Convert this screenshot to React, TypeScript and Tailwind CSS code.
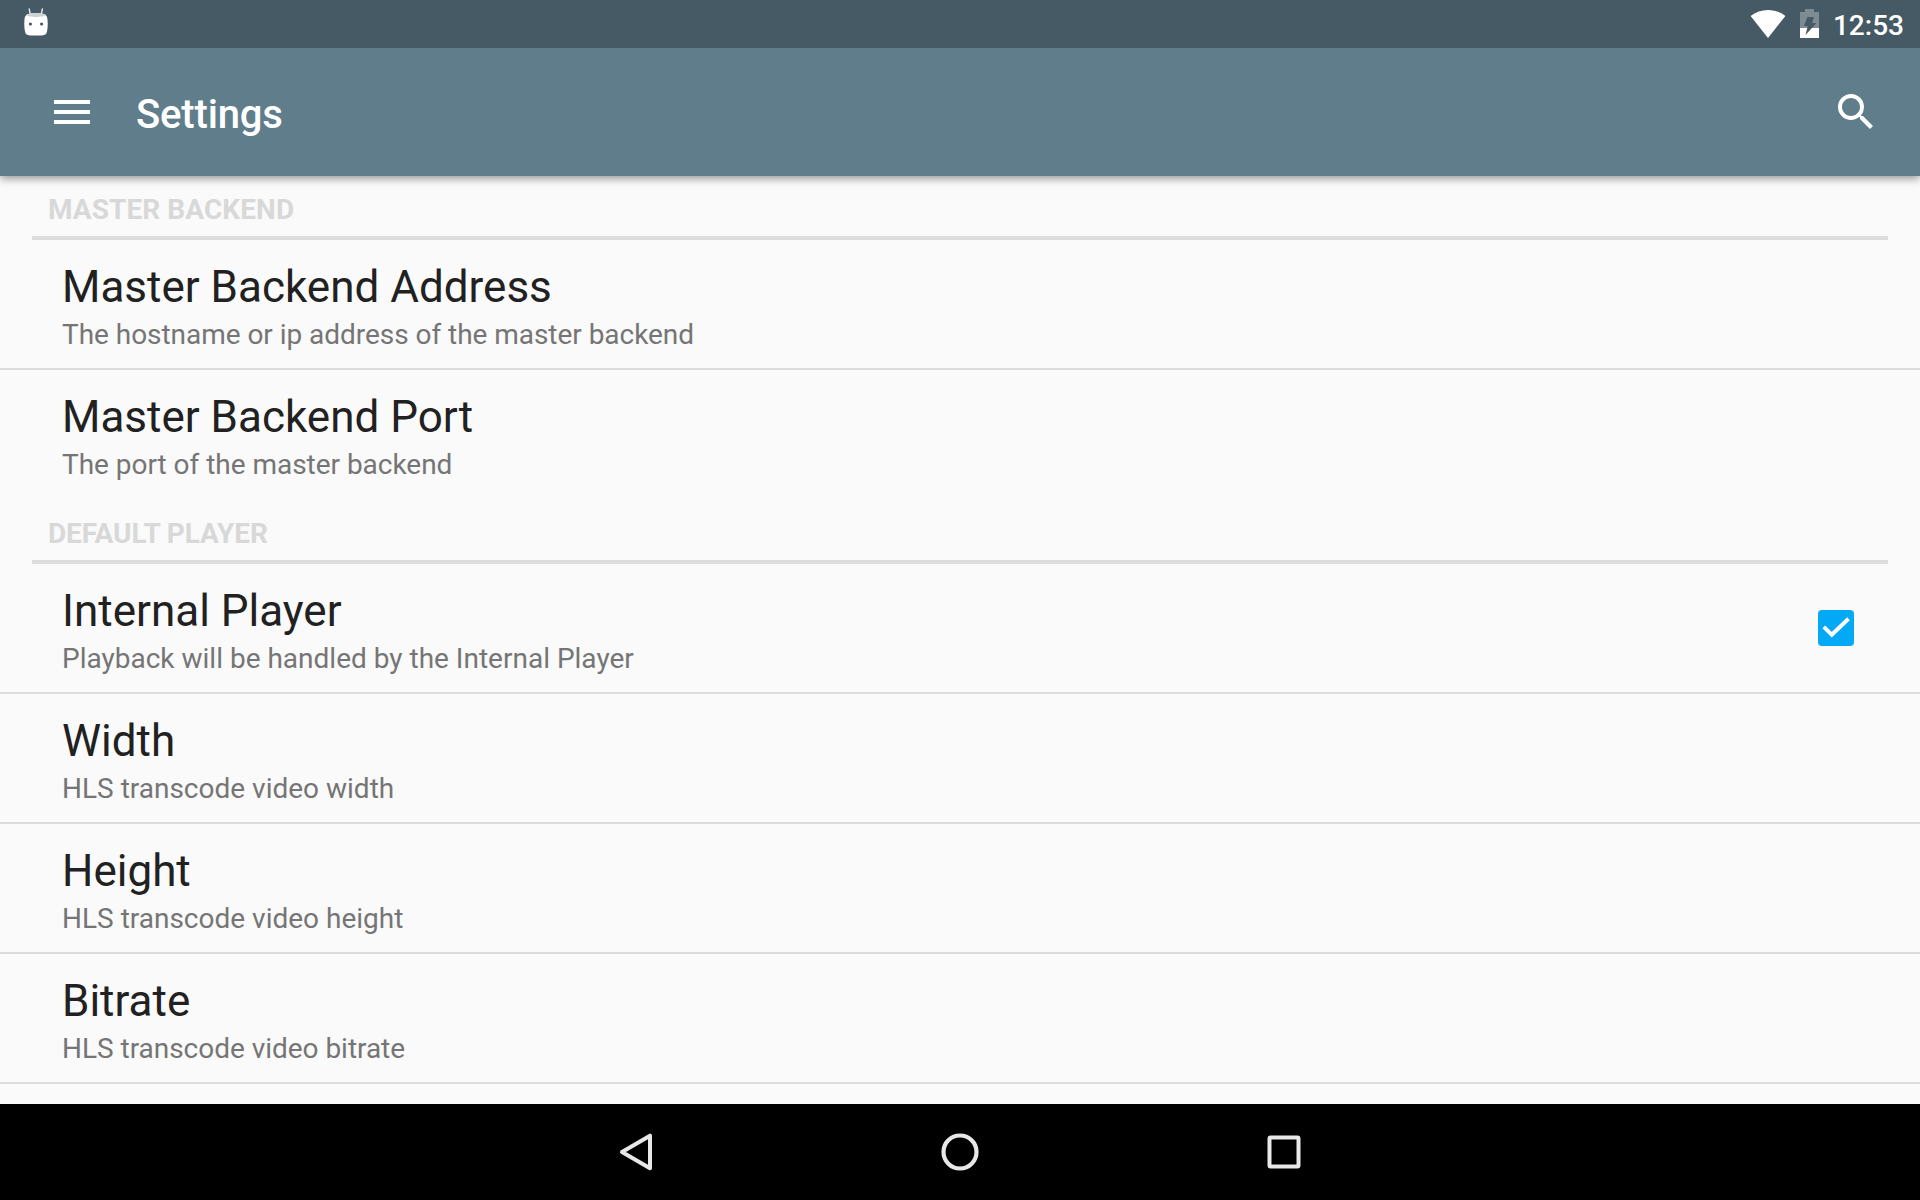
type Item = { title: string; summary: string; checked?: boolean; tracking?: string };
type Section = { name: string; tracking: string; items: Item[] };

const sections: Section[] = [
  {
    name: "MASTER BACKEND",
    tracking: "tracking-[0.08px]",
    items: [
      {
        title: "Master Backend Address",
        summary: "The hostname or ip address of the master backend",
        tracking: "tracking-[-0.04px]",
      },
      { title: "Master Backend Port", summary: "The port of the master backend", tracking: "tracking-[-0.03px]" },
    ],
  },
  {
    name: "DEFAULT PLAYER",
    tracking: "tracking-[-0.08px]",
    items: [
      { title: "Internal Player", summary: "Playback will be handled by the Internal Player", checked: true },
      { title: "Width", summary: "HLS transcode video width" },
      { title: "Height", summary: "HLS transcode video height" },
      { title: "Bitrate", summary: "HLS transcode video bitrate", tracking: "tracking-[-0.03px]" },
      { title: "", summary: "" },
    ],
  },
];

function StatusBar() {
  return (
    <div className="relative z-20 flex h-12 shrink-0 items-start justify-between bg-[#455a64] pr-4 pl-6 text-white">
      <svg className="h-12 w-6" viewBox="0 0 24 48" fill="none">
        <path d="M5.2 9l1.3 6M18.4 9l-1.3 6" stroke="#fff" strokeOpacity=".85" strokeWidth="1.4" strokeLinecap="round" />
        <path d="M3 14.5C6 12.4 18 12.4 21 14.5c2.2 2 2.2 2.4 2.6 6 .3 4 .1 8-.7 11.500-.7 2.300-1.700 3.200-5 3.400-4 .2-8 .2-11.800 0-3.300-.2-4.300-1.100-5-3.400-.8-3.500-1-7.500-.7-11.500.4-3.600.4-4 2.600-6z" fill="#fff" />
        <path d="M2.200 14.800C5 12.300 19 12.300 21.800 14.800 20 17.700 4 17.700 2.200 14.800z" fill="#ccd2d5" />
        <circle cx="6.400" cy="24" r="1.600" fill="#455a64" />
        <circle cx="17.600" cy="24" r="1.600" fill="#455a64" />
      </svg>
      <div className="flex items-start">
        <svg className="mr-[14px] h-12 w-9" viewBox="0 0 36 48">
          <path d="M18 38L.6 16C5.500 12 11.500 10 18 10s12.500 2 17.400 6z" fill="#fff" />
        </svg>
        <svg className="mr-[13px] h-12 w-5" viewBox="0 0 20 48">
          <path d="M5 9h9v3h5v16H0V12h5z" fill="#fff" fillOpacity=".3" />
          <path d="M0 28h19v10H0z" fill="#fff" />
          <path d="M7.500 17h6.500l-2 6h4.500L5.500 35l2.300-9H4z" fill="#455a64" />
        </svg>
        <span className="mt-[9px] text-[28px] leading-[33px] font-medium">12:53</span>
      </div>
    </div>
  );
}

function Toolbar() {
  return (
    <header className="relative z-10 flex h-32 shrink-0 items-start bg-[#607d8b] pr-10 pl-12 text-white shadow-[0_3px_8px_rgba(0,0,0,0.38)]">
      <svg className="mt-10 size-12" viewBox="0 0 24 24" fill="#fff">
        <path d="M3 18h18v-2H3v2zm0-5h18v-2H3v2zm0-7v2h18V6H3z" />
      </svg>
      <h1 className="mt-[43px] ml-10 flex-1 text-[40px] leading-[47px] font-medium tracking-[-0.15px]">Settings</h1>
      <svg className="mt-10 size-12" viewBox="0 0 24 24" fill="#fff">
        <path d="M15.500 14h-.79l-.28-.27A6.471 6.471 0 0 0 16 9.500 6.500 6.500 0 1 0 9.500 16c1.610 0 3.090-.59 4.230-1.570l.27.28v.79l5 4.990L20.490 19l-4.990-5zm-6 0C7.010 14 5 11.990 5 9.500S7.010 5 9.500 5 14 7.010 14 9.500 11.990 14 9.500 14z" />
      </svg>
    </header>
  );
}

function Checkbox() {
  return (
    <svg className="size-9" viewBox="0 0 36 36" fill="none">
      <rect width="36" height="36" rx="4" fill="#03a9f4" />
      <path d="M5.800 16.800l8 8L30.500 8.700" stroke="#fff" strokeWidth="4" />
    </svg>
  );
}

function Row({ item, divider }: { item: Item; divider: boolean }) {
  return (
    <li
      className={`flex h-[130px] items-center justify-between border-b-2 pr-[66px] pl-[62px] ${divider ? "border-[#dcdcdc]" : "border-transparent"}`}
    >
      <div className="h-full pt-[21px]">
        <div className="text-[44px] leading-[52px] text-[#212121]">{item.title}</div>
        <div className={`mt-[5px] text-[28px] leading-[33px] text-[#757575] ${item.tracking ?? ""}`}>{item.summary}</div>
      </div>
      {item.checked && <Checkbox />}
    </li>
  );
}

function NavBar() {
  return (
    <nav className="flex h-24 shrink-0 items-center justify-center gap-[276px] bg-black">
      <svg className="size-12" viewBox="0 0 48 48" fill="none" stroke="#e8e8e8" strokeWidth="4" strokeLinejoin="round">
        <path d="M10 24L38 7.700v32.600z" />
      </svg>
      <svg className="size-12" viewBox="0 0 48 48" fill="none" stroke="#e8e8e8" strokeWidth="4.200">
        <circle cx="24" cy="24" r="16.500" />
      </svg>
      <svg className="size-12" viewBox="0 0 48 48" fill="none" stroke="#e8e8e8" strokeWidth="4">
        <rect x="9.500" y="9.500" width="29" height="29" rx="1" />
      </svg>
    </nav>
  );
}

export default function App() {
  return (
    <div className="flex h-[1200px] w-[1920px] flex-col overflow-hidden bg-[#fafafa] font-[Roboto,sans-serif]">
      <StatusBar />
      <Toolbar />
      <main className="min-h-0 flex-1 overflow-hidden">
        {sections.map((section) => (
          <section key={section.name}>
            <h2
              className={`mx-8 h-16 border-b-4 border-[#dcdcdc] pt-[17px] pl-4 text-[28px] leading-[33px] font-bold text-[#d8d8d8] ${section.tracking}`}
            >
              {section.name}
            </h2>
            <ul>
              {section.items.map((item, i) => (
                <Row key={item.title} item={item} divider={i < section.items.length - 1} />
              ))}
            </ul>
          </section>
        ))}
      </main>
      <NavBar />
    </div>
  );
}
